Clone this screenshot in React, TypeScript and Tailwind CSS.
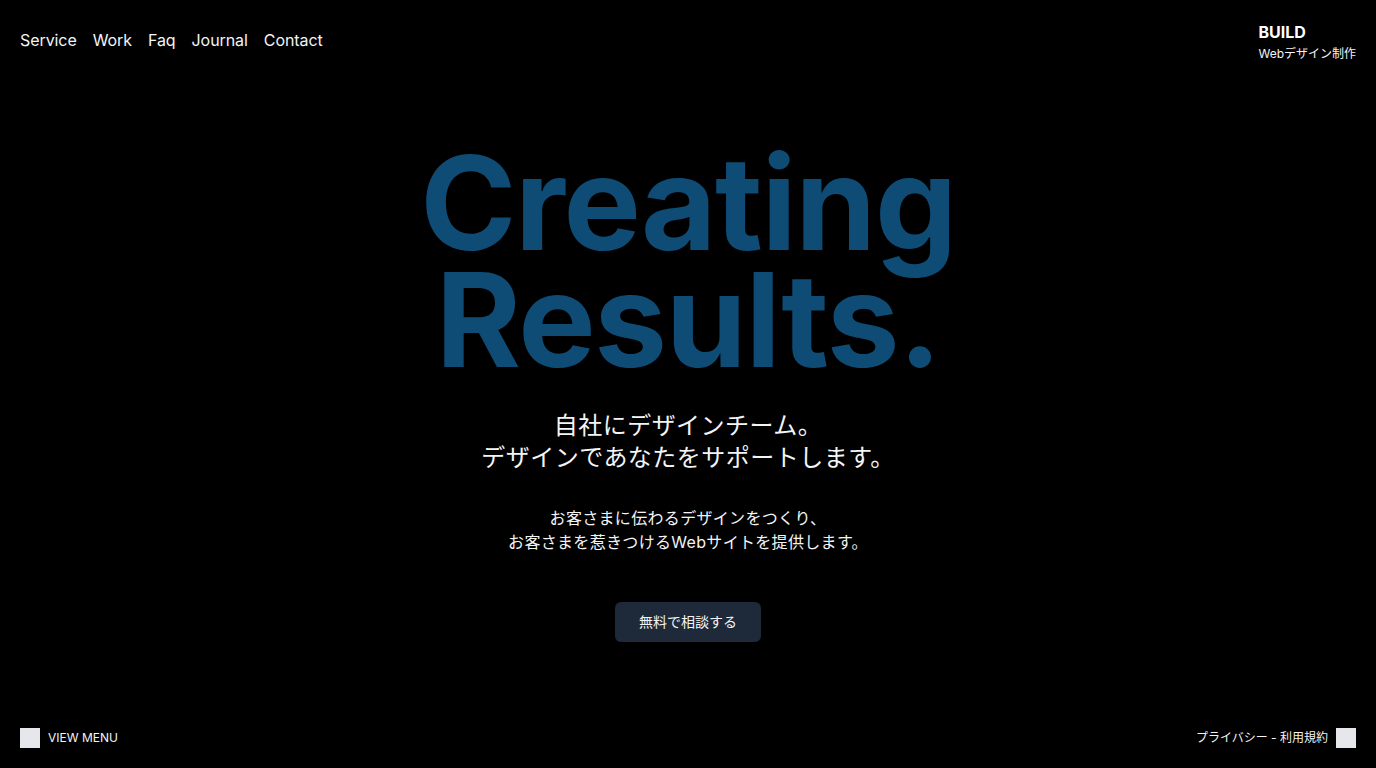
import React from "react";

const navItems = ["Service", "Work", "Faq", "Journal", "Contact"];

const App = () => {
  return (
    <div
      className="flex h-screen w-full flex-col bg-black text-white"
      style={{ fontFamily: "Inter, 'Noto Sans CJK JP', sans-serif" }}
    >
      {/* Header */}
      <header className="flex items-start justify-between px-5 pt-[22px]">
        <nav className="mt-[6px] flex items-center gap-4 text-base leading-6 tracking-[-0.005em] text-gray-100">
          {navItems.map((item) => (
            <a key={item} href="#" className="hover:text-white">
              {item}
            </a>
          ))}
        </nav>
        <div className="flex flex-col">
          <span className="text-base font-bold leading-5">BUILD</span>
          <span className="mt-1 text-xs leading-4 text-gray-100">Webデザイン制作</span>
        </div>
      </header>

      {/* Hero */}
      <main className="flex flex-col items-center pt-[82px] text-center">
        <h1 className="text-[130px] font-bold leading-[117px] tracking-[-0.01em] text-[#0e4c76]">
          Creating
          <br />
          Results.
        </h1>
        <p className="mt-8 text-2xl leading-8 tracking-[0.02em] text-gray-100">
          自社にデザインチーム。
          <br />
          デザインであなたをサポートします。
        </p>
        <p className="mt-8 text-base leading-6 tracking-[0.02em] text-gray-100">
          お客さまに伝わるデザインをつくり、
          <br />
          お客さまを惹きつけるWebサイトを提供します。
        </p>
        <button className="mt-12 h-10 rounded-md bg-gray-800 px-6 text-sm text-gray-100 hover:bg-gray-700">
          無料で相談する
        </button>
      </main>

      {/* Footer */}
      <footer className="mt-auto flex items-center justify-between px-5 pb-5">
        <button className="flex items-center gap-2 text-xs text-gray-100">
          <span className="h-5 w-5 bg-gray-200" />
          VIEW MENU
        </button>
        <div className="flex items-center gap-2 text-xs text-gray-100">
          <a href="#">プライバシー - 利用規約</a>
          <span className="h-5 w-5 bg-gray-200" />
        </div>
      </footer>
    </div>
  );
};

export default App;
